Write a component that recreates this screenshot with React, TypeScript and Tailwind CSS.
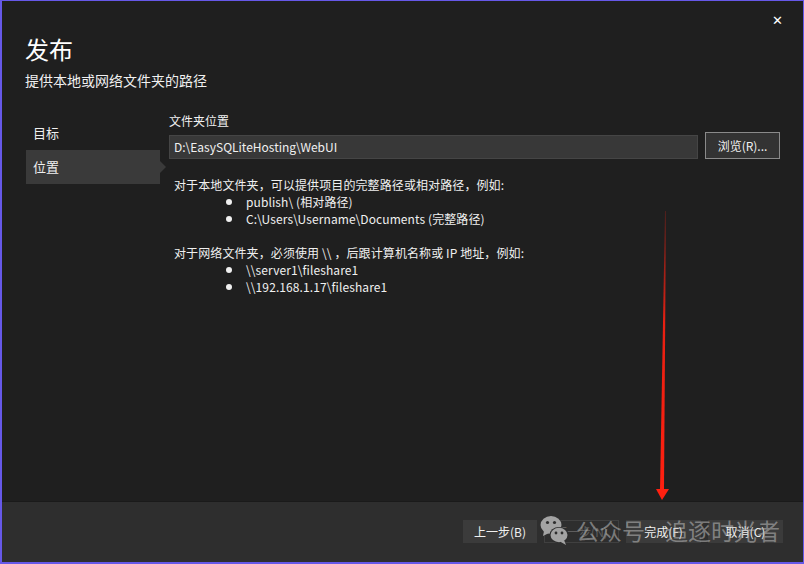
import React from "react";

const font = { fontFamily: '"Noto Sans CJK SC", "Noto Sans", sans-serif' };

function WeChat() {
  return (
    <svg width="30" height="32" viewBox="0 0 30 32">
      <ellipse cx="11" cy="11" rx="10.5" ry="9" fill="#a3a3a3" />
      <path d="M4 17 L3 22 L9 19 Z" fill="#a3a3a3" />
      <circle cx="7.5" cy="8.5" r="1.6" fill="#2e2e2e" />
      <circle cx="14.5" cy="8.5" r="1.6" fill="#2e2e2e" />
      <ellipse cx="19" cy="21" rx="9.5" ry="8" fill="#2e2e2e" />
      <ellipse cx="19" cy="21" rx="8.5" ry="7.2" fill="#a3a3a3" />
      <path d="M24 26 L26 31 L20 27.5 Z" fill="#a3a3a3" />
      <circle cx="16" cy="19" r="1.4" fill="#2e2e2e" />
      <circle cx="22" cy="19" r="1.4" fill="#2e2e2e" />
    </svg>
  );
}

function Bullet({ children }: { children: React.ReactNode }) {
  return (
    <div className="flex items-center pl-[52px]">
      <span className="w-[20px] flex items-center">
        <span className="block w-[6px] h-[6px] rounded-full bg-[#f0f0f0]" />
      </span>
      <span>{children}</span>
    </div>
  );
}

export default function App() {
  return (
    <div
      className="relative w-[804px] h-[564px] overflow-hidden bg-[#1f1f1f] text-[#f0f0f0] flex flex-col border-t border-l-2 border-r border-b-2 border-[#6658e8]"
      style={font}
    >
      {/* close */}
      <div className="absolute right-[20px] top-[12px] text-[13px] text-white leading-none">✕</div>

      {/* header */}
      <div className="pl-[23px] pt-[33px] h-[109px] shrink-0">
        <div className="text-[24px] leading-[30px] text-white">发布</div>
        <div className="mt-[6px] text-[14px] leading-[20px] text-[#f0f0f0]">提供本地或网络文件夹的路径</div>
      </div>

      {/* body */}
      <div className="flex-1 flex pl-[24px] pr-[23px]">
        <div className="w-[134px] shrink-0 pt-[5px] text-[13px]">
          <div className="h-[35px] flex items-center pl-[7px]">目标</div>
          <div className="relative h-[34px] flex items-center pl-[7px] bg-[#3a3a3a]">
            位置
            <div className="absolute right-[-6px] top-[11px] w-0 h-0 border-y-[6px] border-y-transparent border-l-[6px] border-l-[#3a3a3a]" />
          </div>
        </div>
        <div className="flex-1 ml-[9px] pt-[3px]">
          <div className="text-[12px] leading-[16px]">文件夹位置</div>
          <div className="flex items-end gap-[7px] mt-[3px]">
            <div className="flex-1 h-[24px] bg-[#383838] border border-[#454545] flex items-center px-[4px] text-[12px]">
              D:\EasySQLiteHosting\WebUI
            </div>
            <div className="w-[75px] h-[27px] border border-[#8a8a8a] bg-[#333333] flex items-center justify-center text-[12px]">
              浏览(R)...
            </div>
          </div>
          <div className="mt-[17px] pl-[5px] text-[12px] leading-[17px] text-[#f0f0f0] tracking-[0.1px]">
            <div>对于本地文件夹，可以提供项目的完整路径或相对路径，例如:</div>
            <Bullet>publish\ (相对路径)</Bullet>
            <Bullet>C:\Users\Username\Documents (完整路径)</Bullet>
            <div className="h-[17px]" />
            <div>对于网络文件夹，必须使用 \\ ，后跟计算机名称或 IP 地址，例如:</div>
            <Bullet>\\server1\fileshare1</Bullet>
            <Bullet>\\192.168.1.17\fileshare1</Bullet>
          </div>
        </div>
      </div>

      {/* footer */}
      <div className="h-[61px] shrink-0 bg-[#2e2e2e] border-t border-[#1a1a1a] flex items-start justify-end pr-[20px] pt-[18px] gap-[7px] text-[12px]">
        <div className="w-[74px] h-[23px] bg-[#3b3b3b] flex items-center justify-center">上一步(B)</div>
        <div className="w-[75px] h-[23px] border border-[#404040] flex items-center justify-center text-[#5e5e5e]">下一步(N)</div>
        <div className="w-[75px] h-[23px] bg-[#3b3b3b] flex items-center justify-center">完成(F)</div>
        <div className="w-[75px] h-[23px] bg-[#3b3b3b] flex items-center justify-center">取消(C)</div>
      </div>

      {/* watermark */}
      <div className="absolute left-[538px] top-[513px] flex items-center gap-[6px] text-[23px] leading-none text-[rgba(190,190,190,0.55)]" style={font}>
        <WeChat />
        <span>公众号</span>
        <span className="ml-[14px]">追逐时光者</span>
      </div>

      {/* red arrow */}
      <svg className="absolute left-0 top-0 pointer-events-none" width="804" height="564">
        <defs>
          <linearGradient id="g" x1="0" y1="0" x2="0" y2="1">
            <stop offset="0" stopColor="#ff2010" stopOpacity="0.2" />
            <stop offset="0.4" stopColor="#ff2010" stopOpacity="0.9" />
            <stop offset="1" stopColor="#ff2010" />
          </linearGradient>
        </defs>
        <polygon points="663,210 664,210 662,489 658,489" fill="url(#g)" />
        <polygon points="654,488 667,488 660,499" fill="#ff2010" />
      </svg>
    </div>
  );
}
